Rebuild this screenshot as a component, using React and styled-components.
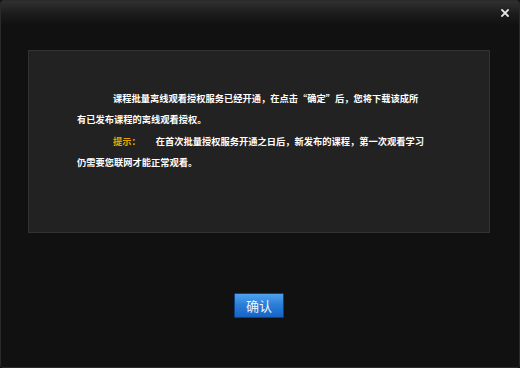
import styled, { createGlobalStyle } from 'styled-components'

const GlobalStyle = createGlobalStyle`
  html, body {
    margin: 0;
    padding: 0;
    background: #0d0d0d;
  }
  body {
    font-family: "Noto Sans CJK SC", "Liberation Sans", sans-serif;
  }
`

const Window = styled.div`
  width: 520px;
  height: 368px;
  box-sizing: border-box;
  background-color: #111;
  border: 1px solid #2a2a2a;
  border-radius: 3px;
  display: flex;
  flex-direction: column;
  overflow: hidden;
`

const TitleBar = styled.div`
  height: 23px;
  flex-shrink: 0;
  display: flex;
  align-items: center;
  justify-content: flex-end;
  padding-right: 10px;
  background: linear-gradient(#303030 0%, #1c1c1c 55%, #121212 100%);
`

const CloseButton = styled.button`
  width: 8px;
  height: 8px;
  padding: 0;
  border: none;
  background: none;
  display: flex;
  align-items: center;
  justify-content: center;
  cursor: pointer;
`

const Body = styled.div`
  flex: 1;
  display: flex;
  flex-direction: column;
  padding: 26px 29px 0 27px;
`

const Panel = styled.div`
  height: 183px;
  box-sizing: border-box;
  background-color: #222;
  border: 1px solid #323232;
  padding: 37px 0 0 48px;
`

const Message = styled.div`
  width: 349px;
  font-size: 9.25px;
  line-height: 21.3px;
  font-weight: 700;
  color: #fff;
  & p {
    margin: 0;
  }
  & .indent {
    text-indent: 36px;
  }
`

const Hint = styled.span`
  color: #e3a800;
  padding-right: 15px;
`

const Footer = styled.div`
  display: flex;
  justify-content: center;
  padding-top: 60px;
`

const ConfirmButton = styled.button`
  width: 50px;
  height: 25px;
  box-sizing: border-box;
  border: 1px solid #0b3f86;
  border-radius: 1px;
  background: linear-gradient(#4fa2ee 0%, #2c7fd8 45%, #1663c4 100%);
  color: #eef5ff;
  font-family: "Noto Sans CJK SC", sans-serif;
  font-size: 13px;
  line-height: 23px;
  padding: 0;
  cursor: pointer;
`

const App = () => {
  return (
    <>
      <GlobalStyle />
      <Window>
        <TitleBar>
          <CloseButton aria-label="close">
            <svg width="8" height="8" viewBox="0 0 8 8">
              <path d="M1 1 L7 7 M7 1 L1 7" stroke="#e6e6e6" strokeWidth="1.8" strokeLinecap="square" />
            </svg>
          </CloseButton>
        </TitleBar>
        <Body>
          <Panel>
            <Message>
              <p className="indent">课程批量离线观看授权服务已经开通，在点击“确定”后，您将下载该成所有已发布课程的离线观看授权。</p>
              <p className="indent"><Hint>提示：</Hint>在首次批量授权服务开通之日后，新发布的课程，第一次观看学习仍需要您联网才能正常观看。</p>
            </Message>
          </Panel>
          <Footer>
            <ConfirmButton>确认</ConfirmButton>
          </Footer>
        </Body>
      </Window>
    </>
  )
}

export default App
